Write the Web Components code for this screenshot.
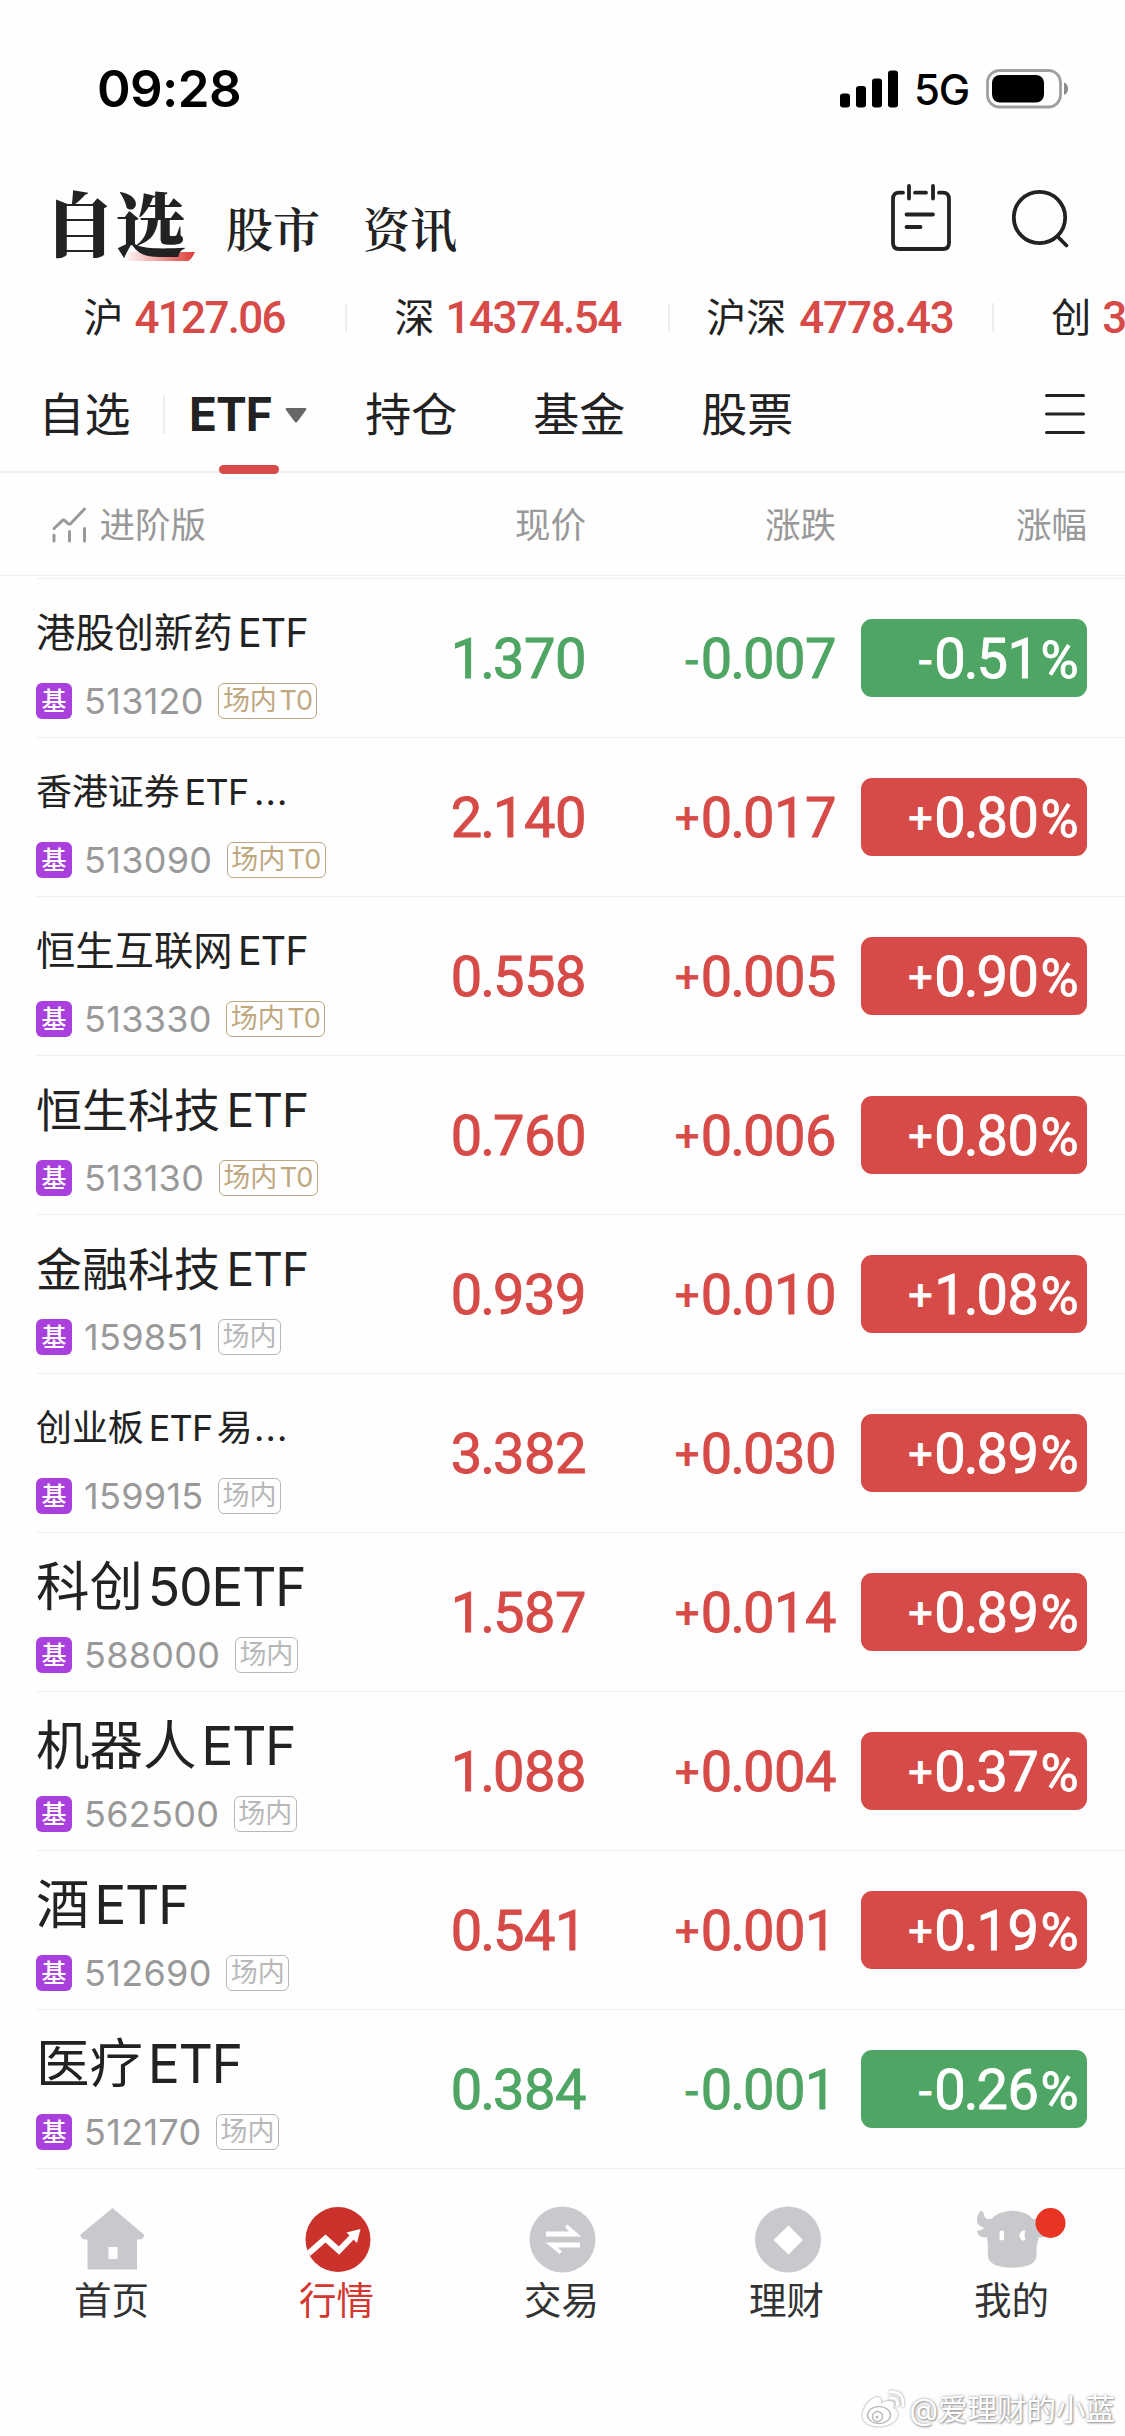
<!DOCTYPE html>
<html lang="zh-CN">
<head>
<meta charset="utf-8">
<title>自选</title>
<style>
html,body{margin:0;padding:0}
body{width:1125px;height:2436px;overflow:hidden;background:#fefefe;color:#222;font-family:Inter,"Noto Sans CJK SC",sans-serif;--up:#d64a47;--down:#4fa563;--line:#efefef}
</style>
</head>
<body>
<stock-app></stock-app>
<script>
const define = (name, html, after) => {
  const t = document.createElement('template');
  t.innerHTML = html;
  customElements.define(name, class extends HTMLElement {
    connectedCallback() {
      if (this.shadowRoot) return;
      this.attachShadow({ mode: 'open' }).append(t.content.cloneNode(true));
      if (after) after.call(this, this.shadowRoot);
    }
  });
};

define('status-bar', `<style>
:host{display:flex;height:140px;box-sizing:border-box;padding:38px 56px 0 97px;align-items:flex-start;justify-content:space-between;color:#000}
.time{font-size:51px;font-weight:600;line-height:102px;letter-spacing:-.6px}
.r{display:flex;align-items:center;height:102px}
.net{font-size:42px;font-weight:500;line-height:102px;margin:2px 17px 0 16px;letter-spacing:-1.200px}
svg{display:block}
</style>
<div class="time">09:28</div>
<div class="r">
<svg width="58" height="38" viewBox="0 0 58 38"><rect y="23.500" width="10" height="14" rx="3"/><rect x="16" y="16" width="10" height="21.500" rx="3"/><rect x="32" y="8.500" width="10" height="29" rx="3"/><rect x="48" y=".5" width="10" height="37" rx="3"/></svg>
<div class="net">5G</div>
<svg width="83" height="40" viewBox="0 0 83 40"><rect x="1.500" y="1.500" width="73" height="36.500" rx="12" fill="none" stroke="#a0a0a0" stroke-width="2.800"/><rect x="6" y="6" width="52" height="27.500" rx="8"/><path d="M78 13.500c5.500 2 5.500 10.500 0 12.500z" fill="#8c8c8c"/></svg>
</div>`);

define('main-header', `<style>
:host{display:flex;height:140px;align-items:flex-start;box-sizing:border-box;padding:0 55px 0 44px}
nav{display:flex;flex:1;font-family:"Noto Serif CJK SC","Source Han Serif SC",Inter,"Noto Sans CJK SC",serif}
.on{font-size:71px;font-weight:900;line-height:80px;height:80px;margin-top:40px;position:relative}
.on svg{position:absolute;left:80px;top:72px;z-index:-1}
.t{font-size:47px;font-weight:600;line-height:60px;margin-top:57px;margin-left:43px}
.t.first{margin-left:40px}
.ic{display:flex;gap:61px;padding-top:44px}
svg{display:block}
</style>
<nav><div class="on">自选<svg width="72" height="9"><defs><linearGradient id="g"><stop offset="0" stop-color="#dc3c37" stop-opacity="0"/><stop offset="1" stop-color="#dc3c37"/></linearGradient></defs><path d="M0 0H71Q68 7 64 9H0z" fill="url(#g)"/></svg></div><div class="t first">股市</div><div class="t">资讯</div></nav>
<div class="ic">
<svg width="60" height="68" viewBox="0 0 60 68" fill="none" stroke="#222" stroke-width="3.800" stroke-linecap="round"><path d="M12 8.700H8Q2 8.700 2 15V59Q2 65 8 65H52Q58 65 58 59V15Q58 8.700 52 8.700H48M24 8.700H35M18 2V14.500M42 2V14.500M15.500 30.500H42M15.500 43H29.500"/></svg>
<svg width="58" height="68" viewBox="0 0 58 68" fill="none" stroke="#222" stroke-width="3.800" stroke-linecap="round"><circle cx="27.500" cy="33.500" r="25.700"/><path d="M46 53L54.500 61.500"/></svg>
</div>`);

define('index-item', `<style>
:host{display:flex;align-items:center;height:72px;flex:none;font-size:40px}
span{line-height:72px}
.v{font-family:Roboto,sans-serif;font-weight:500;font-size:44px;color:var(--up);margin-left:var(--gap,11px);letter-spacing:var(--ls,-1.700px)}
</style><span class="n"></span><span class="v"><slot></slot></span>`, function (r) {
  r.querySelector('.n').textContent = this.getAttribute('name');
});
define('index-ticker', `<style>
:host{display:flex;height:72px;padding:3px 0 0 83.500px;box-sizing:border-box;overflow:hidden;align-items:center}
i{flex:none;width:2px;height:29px;background:#eee}
</style>
<index-item name="沪">4127.06</index-item><i style="margin:0 47.500px 0 60px"></i>
<index-item name="深" style="--ls:-1.500px">14374.54</index-item><i style="margin:0 36px 0 47.500px"></i>
<index-item name="沪深" style="--ls:-1.100px;--gap:13px">4778.43</index-item><i style="margin:0 57.500px 0 38px"></i>
<index-item name="创">3</index-item>`);

define('group-tabs', `<style>
:host{display:flex;height:121px;box-sizing:border-box;border-bottom:2px solid var(--line);padding:0 40px 0 38.500px;font-size:46px;line-height:124px}
i{width:2px;height:39px;background:#eee;margin:43px 24px 0 32.500px}
.on{font-weight:700;position:relative;display:flex;letter-spacing:-1px}
.on svg{margin:56px 0 0 13px}
.bar{position:absolute;left:30px;top:113px;width:60px;height:9px;border-radius:5px;background:var(--up)}
.m{margin-left:auto}
svg{display:block}
</style>
<span>自选</span><i></i>
<span class="on">ETF<svg width="22" height="15"><path d="M2 0H20Q22 0 21 2L12.500 13.500Q11 15.500 9.500 13.500L1 2Q0 0 2 0z" fill="#666"/></svg><b class="bar"></b></span>
<span style="margin-left:58.500px">持仓</span><span style="margin-left:76px">基金</span><span style="margin-left:76px">股票</span>
<svg class="m" width="40" height="121" stroke="#222" stroke-width="3.200" stroke-linecap="round"><path d="M1.600 43.500H38.400M1.600 62H38.400M1.600 80.500H38.400"/></svg>`);

define('column-head', `<style>
:host{display:grid;grid-template-columns:334px 216px 250px 251px;height:103px;box-sizing:border-box;border-bottom:1px solid var(--line);padding:0 0 0 36px;font-size:35.500px;line-height:106px;color:#999;text-align:right}
.f{display:flex;align-items:center;text-align:left;padding-left:15.500px;height:106px}
.f svg{margin:-2px 13px 0 0}
</style>
<div class="f"><svg width="35" height="36" viewBox="0 0 35 36" fill="none" stroke="#999" stroke-width="3" stroke-linecap="round"><path d="M2 21.500L10 13.800Q11.500 12.500 13 13.800L16 16.500Q17.500 17.700 19 16.300L32.500 2M2 28V34M17.500 24.500V34M32.500 21.500V34"/></svg>进阶版</div><div>现价</div><div>涨跌</div><div>涨幅</div>`);

define('fund-row', `<style>
:host{display:grid;grid-template-columns:334px 216px 250px 25px 226px;height:159px;box-sizing:border-box;border-bottom:1px solid var(--line);margin-left:36px;align-items:start;--c:var(--up)}
:host([down]){--c:var(--down)}
.name{height:54px;line-height:54px;margin-top:27px;white-space:nowrap;color:#222}
.name .l{margin:0 .12em 0 .14em;letter-spacing:-.02em}
.name.big .l{margin-left:.09em;letter-spacing:-.027em}
.name .e{letter-spacing:.03em;margin-left:.04em}
.sub{display:flex;align-items:center;height:36px;margin-top:23px}
.ji{width:36px;height:36px;border-radius:6px;background:#a93fdc;color:#fff;font-size:25px;font-weight:500;line-height:36px;text-align:center}
.code{font-size:36px;line-height:36px;color:#999;margin:0 14.500px 0 12px;letter-spacing:.3px}
.tag{height:36px;box-sizing:border-box;border:1.500px solid #b8b8b8;border-radius:6px;color:#b8b8b8;font-size:27px;line-height:34px;padding:0 3.500px;white-space:nowrap}
.tag.t0{border-color:#bfa880;color:#bfa880}
.tag u{text-decoration:none;margin-left:2.500px}
.n{font-family:Roboto,sans-serif;font-weight:400;-webkit-text-stroke:.9px currentColor;font-size:56px;line-height:66px;height:66px;text-align:right;color:var(--c);margin-top:47px;white-space:nowrap;letter-spacing:-.5px}
.n .s{font-size:43px;vertical-align:4px;line-height:0;margin-right:2px}
.n .h{font-size:47px;vertical-align:2px;line-height:0;margin-right:3px}
.n .d{margin:0 -1.500px}
.n .p{font-size:52px;line-height:0;margin-left:2px}
.b{grid-column:5;background:var(--c);color:#fff;height:78px;line-height:80px;border-radius:11px;margin-top:40px;box-sizing:border-box;padding-right:9px}
</style>
<div><div class="name"></div><div class="sub"><span class="ji">基</span><span class="code"></span><span class="tag"></span></div></div>
<div class="n price"></div><div class="n chg"></div><div class="n b pct"></div>`, function (r) {
  const a = n => this.getAttribute(n), q = s => r.querySelector(s);
  const name = q('.name');
  name.style.fontSize = a('size') + 'px';
  name.classList.toggle('big', +a('size') > 50);
  name.innerHTML = a('name').replace(/[0-9A-Z]+/, '<span class="l">$&</span>').replace('...', '<span class="e">...</span>');
  q('.code').textContent = a('code');
  if (this.hasAttribute('t0')) { q('.tag').innerHTML = '场内<u>T0</u>'; q('.tag').classList.add('t0'); }
  else q('.tag').textContent = '场内';
  const styled = v => v.replace('.', '<span class="d">.</span>').replace(/^\+/, '<span class="s">+</span>').replace(/^-/, '<span class="h">-</span>').replace('%', '<span class="p">%</span>');
  q('.price').innerHTML = styled(a('price'));
  q('.chg').innerHTML = styled(a('chg'));
  q('.pct').innerHTML = styled(a('pct'));
});

define('fund-list', `<style>:host{display:block;margin-top:2px}.top{height:1px;margin-left:36px;background:var(--line)}</style>
<div class="top"></div>
<fund-row down t0 size="39.300" name="港股创新药ETF" code="513120" price="1.370" chg="-0.007" pct="-0.51%"></fund-row>
<fund-row t0 size="35.900" name="香港证券ETF..." code="513090" price="2.140" chg="+0.017" pct="+0.80%"></fund-row>
<fund-row t0 size="39.300" name="恒生互联网ETF" code="513330" price="0.558" chg="+0.005" pct="+0.90%"></fund-row>
<fund-row t0 size="46" name="恒生科技ETF" code="513130" price="0.760" chg="+0.006" pct="+0.80%"></fund-row>
<fund-row size="46" name="金融科技ETF" code="159851" price="0.939" chg="+0.010" pct="+1.08%"></fund-row>
<fund-row size="35.900" name="创业板ETF易..." code="159915" price="3.382" chg="+0.030" pct="+0.89%"></fund-row>
<fund-row size="53.500" name="科创50ETF" code="588000" price="1.587" chg="+0.014" pct="+0.89%"></fund-row>
<fund-row size="53.500" name="机器人ETF" code="562500" price="1.088" chg="+0.004" pct="+0.37%"></fund-row>
<fund-row size="53.500" name="酒ETF" code="512690" price="0.541" chg="+0.001" pct="+0.19%"></fund-row>
<fund-row down size="53.500" name="医疗ETF" code="512170" price="0.384" chg="-0.001" pct="-0.26%"></fund-row>`);

define('nav-item', `<style>
:host{display:flex;flex-direction:column;align-items:center;width:225px;color:#333;font-size:37.500px}
:host([active]){color:#d23730}
.i{height:70px;display:flex}
span{line-height:50px;margin-top:2px;padding-right:2px}
</style><div class="i"><slot name="icon"></slot></div><span><slot></slot></span>`);

define('bottom-nav', `<style>
:host{display:flex;padding-top:35px;height:150px}
svg{display:block;overflow:visible}
</style>
<nav-item><svg slot="icon" width="70" height="70"><path d="M34.500 4L66.500 31Q65 35.500 61 35.500H59V65.500H9.500V35.500H7.500Q3.500 35.500 2 31zM30.500 43V55H39.500V43z" fill="#c8c9cd" fill-rule="evenodd"/></svg>首页</nav-item>
<nav-item active><svg slot="icon" width="70" height="70"><circle cx="35" cy="35.500" r="32.500" fill="#ca322b"/><path d="M5.500 49.500L22.500 34.500L36 46.500L51 31" fill="none" stroke="#fff" stroke-width="6"/><path d="M57.500 25L43.500 28.500L54 39z" fill="#fff"/></svg>行情</nav-item>
<nav-item><svg slot="icon" width="70" height="70"><circle cx="34.500" cy="35.500" r="33" fill="#c8c9cd"/><path d="M18 27.500V32.500H53L39.500 20.500L37 23L41 27.500zM52 43.500V38.500H17.500L31.500 50L34 47.500L30 43.500z" fill="#fff"/></svg>交易</nav-item>
<nav-item><svg slot="icon" width="70" height="70"><circle cx="35" cy="35.500" r="33" fill="#c8c9cd"/><path d="M35.500 21.500L50 36L35.500 50.500L20.500 36z" fill="#fff"/></svg>理财</nav-item>
<nav-item><svg slot="icon" width="70" height="70"><path d="M2.500 7Q-1 11 -1 16Q-1 22 6.500 24Q3 26.500 -1 27Q0 33.500 7 33.500H9.200L10 45Q9 50 11 56Q16 63.700 34.200 63.700Q53 63.700 57.500 56Q59.500 50 58.300 45L60.500 33.500H63Q70 33 70 27Q66 26.500 62 24Q69 22 69.500 16Q69.500 11 66 7Q64.500 15 55 15Q48 7 34 6.700Q20 7 13.500 15H9Q6 13 5.500 9Q4.500 6.500 2.500 7z" fill="#c8c9cd"/><rect x="21.500" y="26.500" width="4.600" height="10" rx="2.300" fill="#fff"/><path d="M47.500 27Q46.500 26 45 26.500Q41.500 28 41.500 31.500Q41.500 35 45 36.500Q47 37 47.500 35.500Q45.500 31.500 47.500 27z" fill="#fff"/><circle cx="72.500" cy="19" r="15" fill="#e93323"/></svg>我的</nav-item>`);

define('photo-credit', `<style>
:host{display:flex;justify-content:flex-end;align-items:center;height:44px;margin-top:33px;padding-right:10px;color:#fff;font-size:29.500px;line-height:44px;text-shadow:0 0 3px #999,1px 1px 2px #999}
svg{display:block;margin-right:4px;filter:drop-shadow(0 0 1px #888)}
</style>
<svg width="44" height="40" viewBox="0 0 44 40"><path d="M31 19Q34 12 27 12Q23 12 19 14Q20 7 14 8Q6 11 2 20Q-3 32 8 36Q20 40 30 34Q38 28 35 22Q34 20 31 19z" fill="#fff"/><ellipse cx="17" cy="26" rx="11.500" ry="8.500" fill="none" stroke="#bbb" stroke-width="1.500"/><circle cx="15.500" cy="27.500" r="5" fill="none" stroke="#bbb" stroke-width="1.500"/><circle cx="15" cy="28" r="1.500" fill="#bbb"/><path d="M28 3Q42 2 41 17M28 9Q36 8 35.500 16" fill="none" stroke="#fff" stroke-width="3" stroke-linecap="round"/></svg><span>@爱理财的小蓝</span>`);

define('stock-app', `<style>:host{display:block;width:1125px;height:2436px;position:relative;z-index:0}</style>
<status-bar></status-bar><main-header></main-header><index-ticker></index-ticker><group-tabs></group-tabs><column-head></column-head><fund-list></fund-list><bottom-nav></bottom-nav><photo-credit></photo-credit>`);
</script>
</body>
</html>
